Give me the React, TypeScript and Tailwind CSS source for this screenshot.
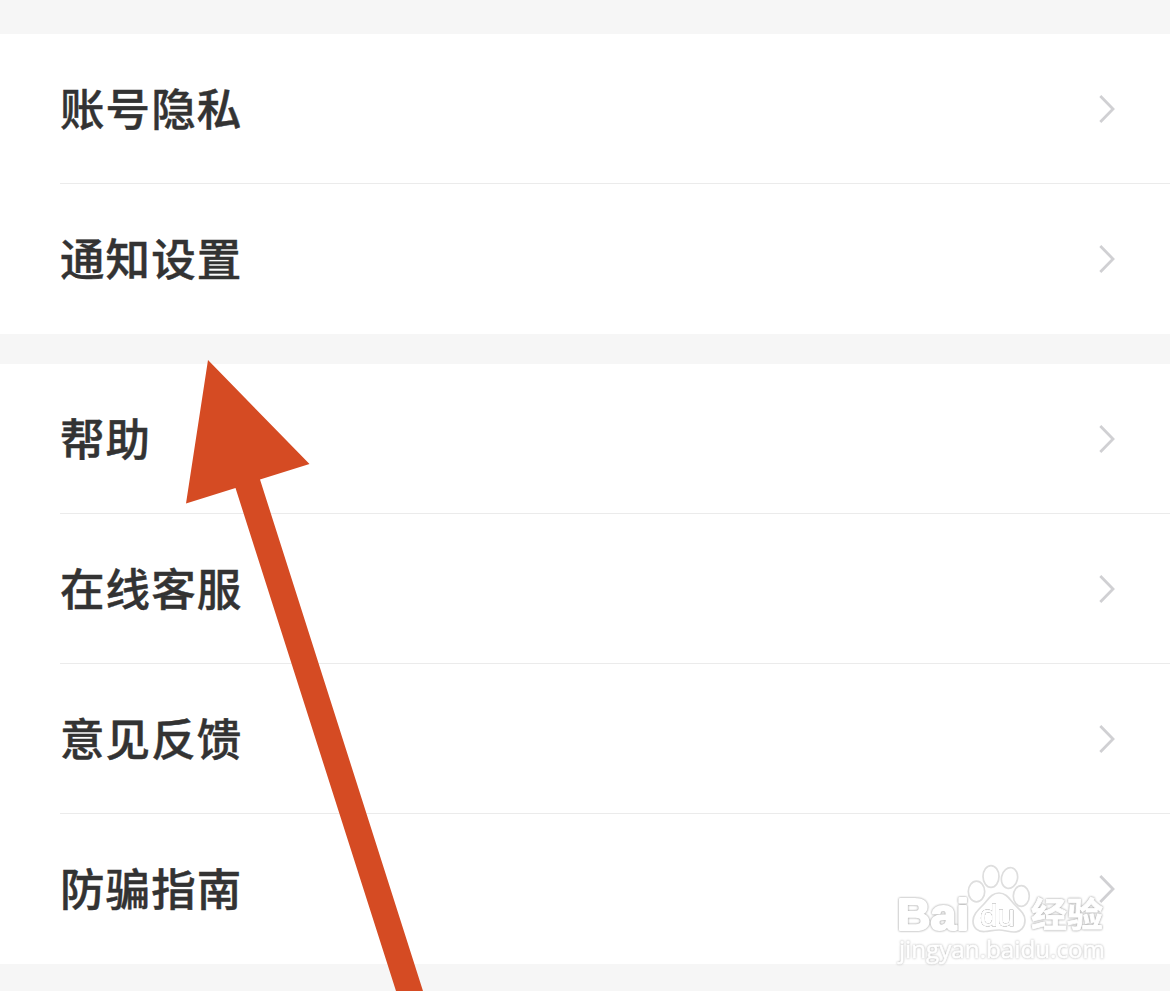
import React from 'react';

const GROUPS: string[][] = [
  ['账号隐私', '通知设置'],
  ['帮助', '在线客服', '意见反馈', '防骗指南'],
];

const Chevron: React.FC = () => (
  <svg className="h-8 w-5" viewBox="0 0 20 32" fill="none" stroke="#d0d0d3" strokeWidth="2.8">
    <path d="M3.3 3 L16 16 L3.3 29" />
  </svg>
);

const SettingRow: React.FC<{ label: string; divider: boolean }> = ({ label, divider }) => (
  <div className="pl-[60px]">
    <div className={`flex h-[150px] items-center justify-between border-b pr-[53px] ${divider ? 'border-[#ebebeb]' : 'border-transparent'}`}>
      <span className="pb-[5px] text-[44.5px] leading-[45px] font-medium tracking-[1.1px] text-[#333333] [-webkit-text-stroke:0.45px_#333333]">{label}</span>
      <Chevron />
    </div>
  </div>
);

const Arrow: React.FC = () => (
  <svg className="absolute inset-0" width="1170" height="991" viewBox="0 0 1170 991">
    <path d="M208 360 L309.5 464 L260 479.5 L423 991 L396 991 L235.5 488 L186 503.5 Z" fill="#d54b23" />
  </svg>
);

const Watermark: React.FC = () => (
  <svg
    className="absolute top-[855px] left-[885px]"
    width="240"
    height="120"
    viewBox="885 855 240 120"
    fill="#ffffff"
    stroke="#ffffff"
    strokeLinejoin="round"
  >
    <g stroke="#dedede" strokeWidth="1.7">
      <ellipse cx="976.5" cy="891.5" rx="8.2" ry="10.3" />
      <ellipse cx="991" cy="876.5" rx="8" ry="10.8" />
      <ellipse cx="1009.5" cy="878" rx="8" ry="10.5" transform="rotate(12 1009.5 878)" />
      <ellipse cx="1021.3" cy="896" rx="8" ry="10.3" />
      <path d="M999 893 C991 893 988 900 983 905 C977 911 973 915 973 921 C973 928 978 932 985 931.5 C990 931 994 930 999 930 C1004 930 1009 932 1014 932 C1021 932 1025 927 1025 920 C1025 914 1020 910 1015 905 C1010 900 1007 893 999 893 Z" />
    </g>
    <g className="[filter:drop-shadow(0_0_0.8px_#a8a8a8)_drop-shadow(0_0_0.6px_#dcdcdc)]">
      <text x="897" y="929.5" fontSize="45" fontWeight="700" fontFamily="Liberation Sans, sans-serif" textLength="72" lengthAdjust="spacingAndGlyphs" strokeWidth="2.2">Bai</text>
      <text transform="translate(1031 926.5) scale(1 0.92)" fontSize="37" fontWeight="700" fontFamily="Noto Sans CJK SC, sans-serif" textLength="72" lengthAdjust="spacingAndGlyphs" strokeWidth="0.9">经验</text>
    </g>
    <text className="[filter:drop-shadow(0_0_0.7px_#808080)_drop-shadow(0_0_0.5px_#c0c0c0)]" x="980" y="925.5" fontSize="30" fontFamily="Liberation Sans, sans-serif" textLength="35" lengthAdjust="spacingAndGlyphs" strokeWidth="0.8">du</text>
    <text className="[filter:drop-shadow(0_0_0.8px_#b0b0b0)]" x="899" y="958" fontSize="24" fontFamily="Open Sans, Noto Sans, sans-serif" textLength="206" lengthAdjust="spacingAndGlyphs" strokeWidth="0.6">jingyan.baidu.com</text>
  </svg>
);

const App: React.FC = () => {
  return (
    <div className="relative flex h-[991px] w-[1170px] flex-col gap-[30px] overflow-hidden bg-[#f6f6f6] pt-[34px] font-['Noto_Sans_CJK_SC',sans-serif]">
      {GROUPS.map((rows, idx) => (
        <div key={idx} className="bg-white">
          {rows.map((label, i) => (
            <SettingRow key={label} label={label} divider={i < rows.length - 1} />
          ))}
        </div>
      ))}
      <Arrow />
      <Watermark />
    </div>
  );
};

export default App;
